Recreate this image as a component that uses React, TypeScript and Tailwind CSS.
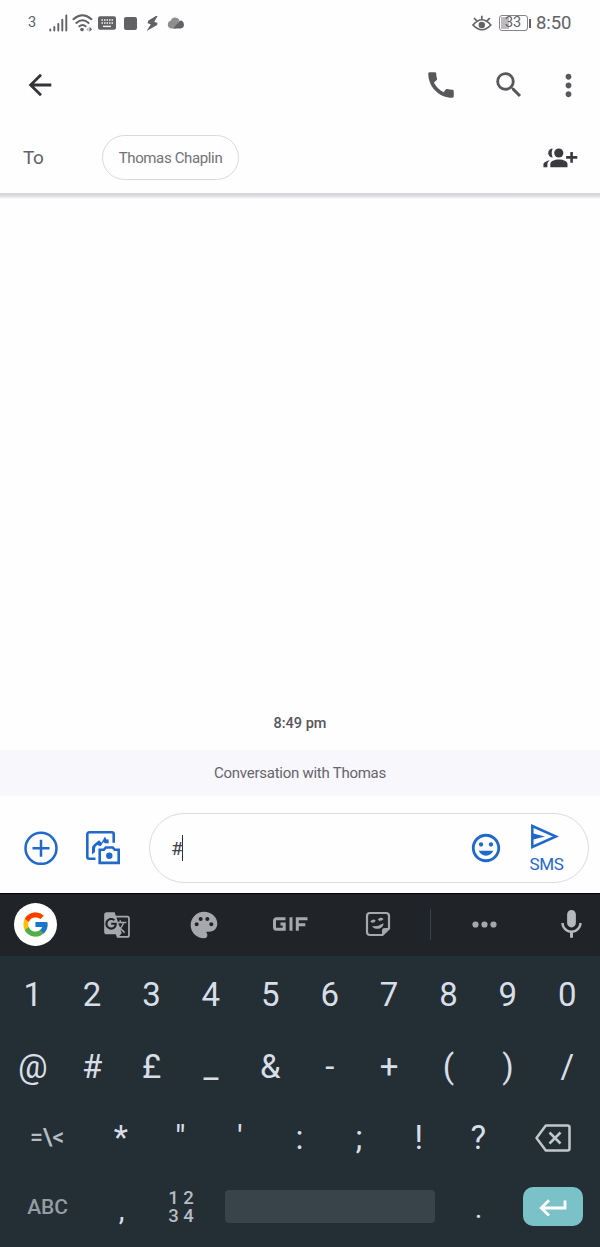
import React from "react";
import {
  MdArrowBack,
  MdCall,
  MdGTranslate,
  MdMic,
  MdMoreVert,
  MdOutlineInsertEmoticon,
  MdPalette,
  MdSearch,
} from "react-icons/md";
import { FcGoogle } from "react-icons/fc";

const DIGITS = ["1", "2", "3", "4", "5", "6", "7", "8", "9", "0"];
const SYMBOLS = ["@", "#", "£", "_", "&", "-", "+", "(", ")", "/"];
const PUNCTUATION = ["*", '"', "'", ":", ";", "!", "?"];

function StatusBar() {
  return (
    <div className="flex h-[46px] items-center pl-7 pr-7 text-[#626164]">
      <span className="w-[21px] pt-px text-[14.5px] leading-none">3</span>
      <svg className="h-[18px] w-[19px]" viewBox="0 0 19 18" stroke="currentColor" strokeWidth="1.9" strokeLinecap="round">
        <path d="M1.3 16.6v-1.2M5.3 16.6v-3.6M9.3 16.6v-6.6M13.3 16.6V5.8M17.3 16.6V1.4" />
      </svg>
      <svg className="ml-1 h-[18px] w-[21px]" viewBox="0 0 21 18" fill="none" stroke="currentColor" strokeWidth="2" strokeLinecap="round">
        <path d="M1.4 5.2Q10.5-2.6 19.4 5.2M4.3 8.9Q10.5 3.6 16.6 8.9M7.4 12.3Q10.5 9.6 13.6 12.3" />
        <circle cx="10" cy="15.6" r="1.8" fill="currentColor" stroke="none" />
        <path d="M16.5 13.2v4.4l-2.2-2.2z" fill="#b0afb2" stroke="none" />
        <path d="M17.5 12.8v5l2.6-2.5z" fill="currentColor" stroke="none" />
      </svg>
      <svg className="ml-[5px] h-[14px] w-[18px]" viewBox="0 0 18 14">
        <rect y="0.3" width="18" height="13.4" rx="2" fill="currentColor" />
        <path d="M3.5 4h11.5M3.5 7h11.5" stroke="#f5f5f6" strokeWidth="1.5" strokeDasharray="1.5 1" />
        <path d="M5 10.4h8" stroke="#f5f5f6" strokeWidth="1.4" />
      </svg>
      <span className="ml-2 h-[13px] w-[13px] rounded-[2px] bg-[#626164]" />
      <svg className="ml-[9px] h-[17px] w-[13px]" viewBox="0 0 13 17" fill="currentColor">
        <path d="M9.8 1 2.2 5.8 1.6 8.2 4.8 9.2 .6 16 11.2 10 11.4 7.8 8.2 6.9 11.6 1z" />
      </svg>
      <svg className="ml-2 h-[12px] w-[18px]" viewBox="0 0 18 12">
        <path d="M4.2 11.5a4 4 0 0 1-.5-7.8A4.7 4.7 0 0 1 12.4 3L9 11.5z" fill="#8e8d90" />
        <path d="M6.2 11.5 13 3.4a4.1 4.1 0 0 1 .7 8.1z" fill="#626164" />
      </svg>
      <svg className="ml-auto h-[17px] w-[20px]" viewBox="0 0 20 17" fill="none" stroke="currentColor" strokeWidth="1.7">
        <path d="M1 10Q10-.5 18.8 10 10 19.5 1 10zM9.8 5V.8M5 6.2 2 3M14.8 6.2 17.8 3" />
        <circle cx="9.8" cy="10" r="3.2" fill="currentColor" stroke="none" />
      </svg>
      <div className="ml-[7px] flex h-4 w-[29px] items-center rounded-[3px] border-[1.5px] border-[#858487] p-[1px]">
        <div className="flex h-full w-2 items-center bg-[#bdbbbf]">
          <span className="pl-[4px] text-[14.5px] leading-none tracking-[-0.2px]">33</span>
        </div>
      </div>
      <span className="ml-[1px] h-[9px] w-[2px] bg-[#626164]" />
      <span className="ml-[5px] w-[36px] pt-px text-[18.5px] leading-none tracking-[-0.1px]">8:50</span>
    </div>
  );
}

function AppBar() {
  return (
    <div className="flex h-[78px] items-center pl-[23px] text-[#58575a]">
      <MdArrowBack className="h-[34px] w-[34px] text-[#343337]" />
      <MdCall className="ml-auto h-[34px] w-[34px]" />
      <MdSearch className="ml-[34px] h-[34px] w-[34px]" />
      <MdMoreVert className="ml-[25px] mr-[14px] h-[35px] w-[35px]" />
    </div>
  );
}

function Recipients() {
  return (
    <div className="flex h-[69px] items-center pb-[2px] pl-[23px] pr-[22px]">
      <span className="w-[79px] pt-px text-[19px] tracking-[-0.4px] text-[#626164]">To</span>
      <div className="flex h-[45px] w-[137px] items-center justify-center rounded-full border-[1.5px] border-[#dad9dd] pt-px text-[15px] tracking-[-0.36px] text-[#737275]">
        Thomas Chaplin
      </div>
      <svg className="ml-auto h-[20px] w-[35px]" viewBox="0 0 35 20" fill="#3b3a3f">
        <circle cx="15.8" cy="5" r="4.6" />
        <path d="M7.3 19.2v-3.1c0-6.3 17.2-6.3 17.2 0v3.1zM9.7.5a4.5 4.5 0 1 0 0 9Q7.7 5 9.7.5zM6.8 12.2C3.2 13 .4 14.5.4 16.5v2.7h4v-3.5q0-2 2.4-3.5zM27.3 4h2.6v4.1h4.4v2.6h-4.4v4h-2.6v-4h-4.2V8.1h4.2z" />
      </svg>
    </div>
  );
}

function Composer() {
  return (
    <div className="flex h-[97px] items-center pl-6 pr-[11px] pt-[6px]">
      <svg className="h-[34px] w-[34px]" viewBox="0 0 34 34" fill="none" stroke="#1f69cd" strokeWidth="2.5">
        <circle cx="17" cy="17.3" r="15.5" />
        <path d="M17 8.8v17M8.5 17.3h17" />
      </svg>
      <svg className="ml-7 mt-px h-[34px] w-[34px]" viewBox="0 0 34 34" fill="none" stroke="#1f69cd" strokeWidth="2.6">
        <path d="M9.5 27.7H3.3a2 2 0 0 1-2-2V3.3a2 2 0 0 1 2-2h22.400a2 2 0 0 1 2 2v8.500" />
        <path d="M13.7 18.8h4.2l1.9-2.3h7l1.9 2.3h4v13.1h-19z" />
        <circle cx="23.3" cy="24.8" r="3.2" fill="#1f69cd" stroke="none" />
        <path d="M6 23.500v-6.500C6 14.200 9.500 12.200 13.200 9.200L15.500 11.800 19 5.500 20.400 8.600 22.400 8.200 22.900 12.300H19L17.300 10.900 14.800 15.200 11.300 13.900C10 14.900 9 16.200 9 18v3z" fill="#1f69cd" stroke="none" />
      </svg>
      <div className="ml-[29px] flex h-[70px] flex-1 items-center rounded-full border-[1.5px] border-[#dcdbe0] pl-[21px] pr-[23px]">
        <span className="w-[11px] pt-px text-[19px] leading-none tracking-[-0.5px] text-[#424145]">#</span>
        <span className="h-[26px] w-px bg-[#343337]" />
        <MdOutlineInsertEmoticon className="ml-auto h-[34px] w-[34px] text-[#1f69cd]" />
        <div className="ml-[26px] mr-px flex w-[35px] flex-col items-center pt-[2px]">
          <svg className="-ml-1 h-[25px] w-[29px]" viewBox="0 0 29 25" fill="none" stroke="#1f69cd" strokeWidth="2.5">
            <path d="M2.3 2v21L26 12.500z" />
            <path d="M2.5 9.2 15 12.5 2.5 15.800z" fill="#1f69cd" stroke="none" />
          </svg>
          <span className="mt-[6px] text-[17px] leading-[18px] tracking-[-0.3px] text-[#1f69cd]">SMS</span>
        </div>
      </div>
    </div>
  );
}

function Toolbar() {
  return (
    <div className="flex h-[63px] items-center border-t border-black bg-[#202428] pb-[2px] pl-[14px] text-[#a6a8ac]">
      <div className="flex h-[43px] w-[43px] items-center justify-center rounded-full bg-white">
        <FcGoogle className="h-[29px] w-[29px]" />
      </div>
      <MdGTranslate className="ml-[46px] mt-[2px] h-[28px] w-[28px]" />
      <MdPalette className="ml-[57px] mt-[2px] h-[32px] w-[32px]" />
      <svg className="ml-[53px] h-[14px] w-[35px]" viewBox="0 0 35 14" fill="none" stroke="currentColor" strokeWidth="3">
        <path d="M12.5 1.8H3.5a2 2 0 0 0-2 2v6.400a2 2 0 0 0 2 2h7.700V7H7.500M18 .3v13.400M24.300 13.700V1.800H34.500M24.300 7.700h8" />
      </svg>
      <svg className="ml-[57px] h-[26px] w-[26px]" viewBox="0 0 26 26" fill="none" stroke="currentColor" strokeWidth="2.2">
        <path d="M17.5 24H5a3 3 0 0 1-3-3V5a3 3 0 0 1 3-3h16a3 3 0 0 1 3 3v12.500z" />
        <path d="M17 24.500v-5q0-2.500 2.500-2.500H24.500z" fill="currentColor" stroke="none" />
        <path d="M6.300 11.300q1.500-2.300 3.700-.8M13.800 9.300q2-2.300 3.800-.5" strokeWidth="2.600" />
        <path d="M7 15.200q6.500.500 11.500-3c.2 5.600-8 7.600-11.500 3z" fill="currentColor" stroke="none" />
      </svg>
      <span className="ml-[39px] h-[31px] w-px bg-[#3a4247]" />
      <svg className="ml-[41px] h-[7px] w-[25px]" viewBox="0 0 25 7" fill="currentColor">
        <circle cx="3.5" cy="3.5" r="3.1" />
        <circle cx="12.5" cy="3.5" r="3.1" />
        <circle cx="21.5" cy="3.5" r="3.1" />
      </svg>
      <MdMic className="ml-auto mr-[11px] h-[35px] w-[35px] text-[#b8b9bc]" />
    </div>
  );
}

function Keyboard() {
  return (
    <div className="flex h-[291px] flex-col bg-[#242f35] px-[3px] text-[33px] leading-none text-[#d8dee7]">
      <div className="grid h-[77px] grid-cols-10 items-center justify-items-center">
        {DIGITS.map((k) => (
          <span key={k}>{k}</span>
        ))}
      </div>
      <div className="grid h-[66px] grid-cols-10 items-center justify-items-center">
        {SYMBOLS.map((k) => (
          <span key={k}>{k}</span>
        ))}
      </div>
      <div className="flex h-[77px] items-center">
        <span className="w-[88px] text-center text-[23px] font-medium text-[#b6bcc3]">=\&lt;</span>
        <div className="grid flex-1 grid-cols-7 justify-items-center">
          {PUNCTUATION.map((k) => (
            <span key={k}>{k}</span>
          ))}
        </div>
        <div className="flex w-[89px] justify-center">
          <svg className="h-[28px] w-[36px]" viewBox="0 0 36 28" fill="none" stroke="#c1c7cd" strokeWidth="2.5" strokeLinejoin="round">
            <path d="M10.8 1.500H32.500a2 2 0 0 1 2 2v21a2 2 0 0 1-2 2H10.800L1.500 14z" />
            <path d="m14.500 8.500 11 11M25.500 8.500l-11 11" />
          </svg>
        </div>
      </div>
      <div className="flex h-[60px] items-center">
        <span className="w-[89px] pt-[2px] text-center text-[21px] font-medium tracking-[-0.2px] text-[#969ca3]">ABC</span>
        <span className="w-[59px] pt-[9px] text-center text-[29px]">,</span>
        <div className="grid w-[60px] grid-cols-[13px_13px] justify-center gap-x-[2px] pt-[2px] text-center text-[18.5px] font-medium leading-[18px] text-[#b6bcc3]">
          <span>1</span>
          <span>2</span>
          <span>3</span>
          <span>4</span>
        </div>
        <span className="ml-[14px] h-[33px] w-[210px] rounded-[4px] bg-[#39434a]" />
        <span className="ml-[14px] w-[59px] pt-[4px] text-center text-[29px]">.</span>
        <div className="ml-[15px] flex h-[39px] w-[60px] items-center justify-center rounded-[10px] bg-[#7bc2c8]">
          <svg className="mt-[3px] h-[17px] w-[28px]" viewBox="0 0 28 17" fill="none" stroke="white" strokeWidth="2.8">
            <path d="M26 1.500V9H2M10 1.200 2.200 9l7.800 7.500" />
          </svg>
        </div>
      </div>
    </div>
  );
}

export default function App() {
  return (
    <div className="flex h-[1247px] w-[600px] flex-col overflow-hidden bg-[#fefdff] font-['Roboto',sans-serif]">
      <StatusBar />
      <AppBar />
      <Recipients />
      <div className="h-[6px] shrink-0 bg-linear-to-b from-[#d7d5d9] via-[#dddce0] to-[#fefdff]" />
      <div className="flex flex-1 items-end justify-center pb-[17px] text-[14.5px] font-medium leading-[18px] text-[#57565a]">
        8:49 pm
      </div>
      <div className="flex h-[46px] items-center justify-center bg-[#f8f7fc] pt-px text-[15px] tracking-[-0.26px] text-[#666569]">
        Conversation with Thomas
      </div>
      <Composer />
      <Toolbar />
      <Keyboard />
    </div>
  );
}
